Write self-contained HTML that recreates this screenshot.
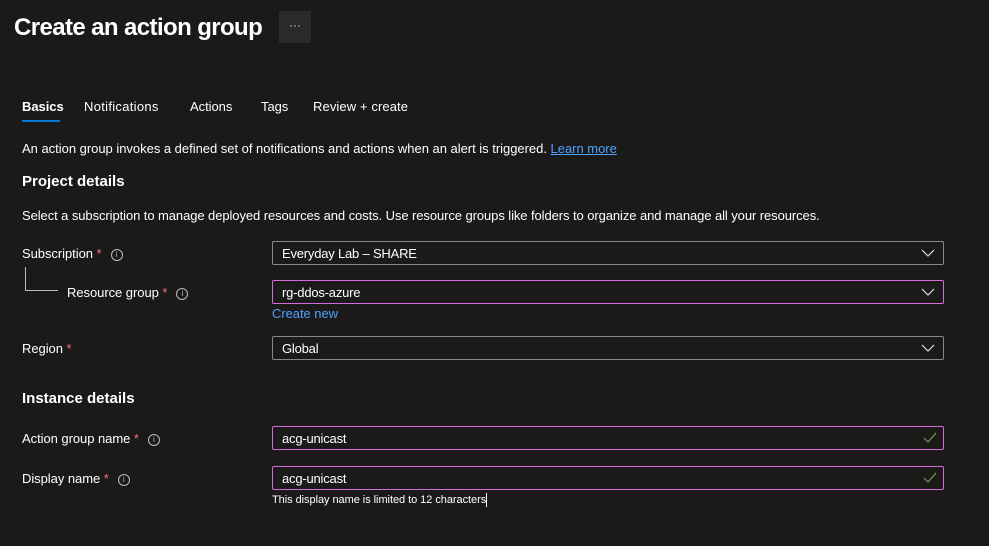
<!DOCTYPE html>
<html><head><style>
body{margin:0;width:989px;height:546px;background:#1b1a19;color:#fff;font-family:"Liberation Sans",sans-serif;position:relative;overflow:hidden}
.a{position:absolute;white-space:nowrap}
.t{font-size:13px;letter-spacing:-0.05px}
.h{font-size:15px;font-weight:bold}
.star{color:#f1707b}
.info{display:inline-block;width:10px;height:10px;border:1px solid #bbb;border-radius:50%;font-size:8px;text-align:center;line-height:10px;color:#bbb;vertical-align:middle;margin-left:9px}
.box{position:absolute;left:272px;width:670px;height:22px;border:1px solid #8a8886;border-radius:2px;box-sizing:content-box}
.box span{position:absolute;left:9px;top:4px;font-size:13px;letter-spacing:-0.2px}
.mag{border-color:#d36bdb}
.chev{position:absolute;right:8px;top:5px}
.chk{position:absolute;right:6px;top:5px}
</style></head><body>
<div class="a" style="left:14px;top:14px;font-size:24px;font-weight:bold;letter-spacing:-0.6px">Create an action group</div>
<div class="a" style="left:279px;top:11px;width:32px;height:32px;background:#2b2a29;color:#ccc;text-align:center;font-size:12px;line-height:28px">···</div>
<div class="a t" style="left:22px;top:99px;font-weight:bold">Basics</div>
<div class="a" style="left:22px;top:120px;width:38px;height:2px;background:#0078d4"></div>
<div class="a t" style="left:84px;top:99px;letter-spacing:0.3px">Notifications</div>
<div class="a t" style="left:190px;top:99px">Actions</div>
<div class="a t" style="left:261px;top:99px">Tags</div>
<div class="a t" style="left:313px;top:99px;letter-spacing:0.1px">Review + create</div>
<div class="a t" style="left:22px;top:141px;letter-spacing:-0.02px">An action group invokes a defined set of notifications and actions when an alert is triggered. <span style="color:#4da3ff;text-decoration:underline">Learn more</span></div>
<div class="a h" style="left:22px;top:173px">Project details</div>
<div class="a t" style="left:22px;top:208px;letter-spacing:-0.08px">Select a subscription to manage deployed resources and costs. Use resource groups like folders to organize and manage all your resources.</div>
<div class="a t" style="left:22px;top:246px">Subscription <span class="star">*</span><span class="info">i</span></div>
<div class="box" style="top:241px"><span>Everyday Lab – SHARE</span><svg class="chev" width="14" height="12" viewBox="0 0 14 12"><path d="M1 3l6 6 6-6" stroke="#ddd" fill="none" stroke-width="1.2"/></svg></div>
<div class="a" style="left:25px;top:267px;width:32px;height:23px;border-left:1px solid #bbb;border-bottom:1px solid #bbb"></div>
<div class="a t" style="left:67px;top:285px">Resource group <span class="star">*</span><span class="info">i</span></div>
<div class="box mag" style="top:280px"><span>rg-ddos-azure</span><svg class="chev" width="14" height="12" viewBox="0 0 14 12"><path d="M1 3l6 6 6-6" stroke="#ddd" fill="none" stroke-width="1.2"/></svg></div>
<div class="a t" style="left:272px;top:306px;color:#4da3ff">Create new</div>
<div class="a t" style="left:22px;top:341px">Region <span class="star">*</span></div>
<div class="box" style="top:336px"><span>Global</span><svg class="chev" width="14" height="12" viewBox="0 0 14 12"><path d="M1 3l6 6 6-6" stroke="#ddd" fill="none" stroke-width="1.2"/></svg></div>
<div class="a h" style="left:22px;top:390px">Instance details</div>
<div class="a t" style="left:22px;top:431px">Action group name <span class="star">*</span><span class="info">i</span></div>
<div class="box mag" style="top:426px"><span>acg-unicast</span><svg class="chk" width="14" height="12" viewBox="0 0 14 12"><path d="M1 6l4 4 8-9" stroke="#6bb04a" fill="none" stroke-width="1.1"/></svg></div>
<div class="a t" style="left:22px;top:471px">Display name <span class="star">*</span><span class="info">i</span></div>
<div class="box mag" style="top:466px"><span>acg-unicast</span><svg class="chk" width="14" height="12" viewBox="0 0 14 12"><path d="M1 6l4 4 8-9" stroke="#6bb04a" fill="none" stroke-width="1.1"/></svg></div>
<div class="a" style="left:272px;top:493px;font-size:11px;letter-spacing:-0.05px">This display name is limited to 12 characters<span style="display:inline-block;width:1px;height:14px;background:#fff;vertical-align:middle"></span></div>
</body></html>
